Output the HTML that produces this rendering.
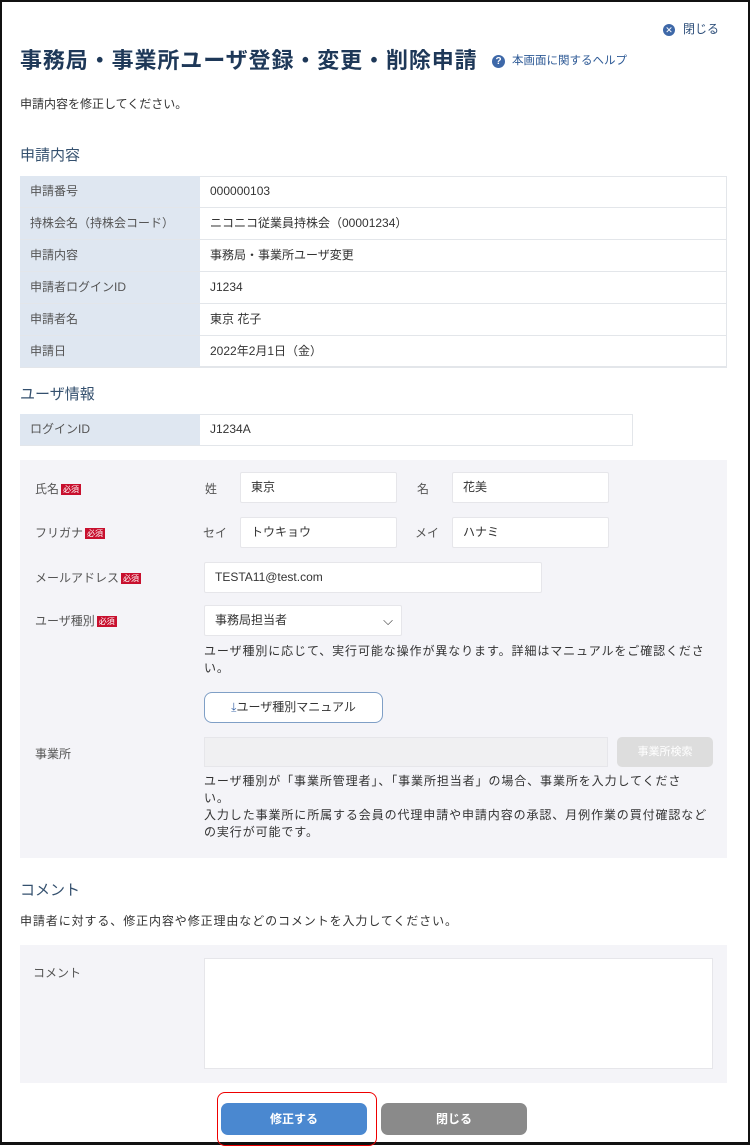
<!DOCTYPE html><html><head><meta charset="utf-8"><style>
*{box-sizing:border-box;margin:0;padding:0}
body{width:750px;height:1145px;background:#fff;font-family:"Liberation Sans","Noto Sans CJK JP",sans-serif;color:#333;font-size:12px;position:relative;overflow:hidden}
.frame{position:absolute;left:0;top:0;width:750px;height:1145px;border:2px solid #111;border-bottom-width:3px}
.a{position:absolute}
.h{color:#34506e;font-size:15px}
.lab{background:#dfe7f1;color:#555}
.cell{position:absolute;height:32px;line-height:31px;padding-left:10px;border-bottom:1px solid #e3e6ea;font-size:12px}
.in{position:absolute;background:#fff;border:1px solid #e6e6ea;border-radius:2px;height:31px;line-height:29px;padding-left:10px;font-size:12px;color:#333}
.req{display:inline-block;background:#c8102e;color:#fff;font-size:8px;line-height:11px;padding:0 2px;margin-left:2px;vertical-align:1px}
.fl{position:absolute;color:#555;font-size:12px}
.t{font-size:12px;letter-spacing:0.9px;line-height:17px}
</style></head><body>
<div class="frame"></div>
<div class="a" style="left:663px;top:20px;font-size:12px;color:#2e4f7a"><span style="display:inline-block;width:12px;height:12px;border-radius:50%;background:#3e68a8;color:#fff;font-size:9px;line-height:12px;text-align:center;margin-right:8px">✕</span>閉じる</div>
<div class="a" style="left:20px;top:43px;font-size:22px;color:#1e3858;font-weight:bold;letter-spacing:0.9px">事務局・事業所ユーザ登録・変更・削除申請</div>
<div class="a" style="left:492px;top:52px;font-size:11.5px;color:#2e5a96"><span style="display:inline-block;width:13px;height:13px;border-radius:50%;background:#3e68a8;color:#fff;font-size:10px;line-height:13px;text-align:center;margin-right:7px;font-weight:bold">?</span>本画面に関するヘルプ</div>
<div class="a t" style="left:20px;top:96px;letter-spacing:0">申請内容を修正してください。</div>
<div class="a h" style="left:20px;top:144px">申請内容</div>
<div class="a" style="left:20px;top:176px;width:707px;height:191px;border:1px solid #e3e6ea"></div>
<div class="cell lab" style="left:20px;top:176px;width:180px">申請番号</div><div class="cell" style="left:200px;top:176px;width:527px">000000103</div>
<div class="cell lab" style="left:20px;top:208px;width:180px">持株会名（持株会コード）</div><div class="cell" style="left:200px;top:208px;width:527px">ニコニコ従業員持株会（00001234）</div>
<div class="cell lab" style="left:20px;top:240px;width:180px">申請内容</div><div class="cell" style="left:200px;top:240px;width:527px">事務局・事業所ユーザ変更</div>
<div class="cell lab" style="left:20px;top:272px;width:180px">申請者ログインID</div><div class="cell" style="left:200px;top:272px;width:527px">J1234</div>
<div class="cell lab" style="left:20px;top:304px;width:180px">申請者名</div><div class="cell" style="left:200px;top:304px;width:527px">東京 花子</div>
<div class="cell lab" style="left:20px;top:336px;width:180px">申請日</div><div class="cell" style="left:200px;top:336px;width:527px">2022年2月1日（金）</div>
<div class="a h" style="left:20px;top:383px">ユーザ情報</div>
<div class="a" style="left:20px;top:414px;width:613px;height:32px;border:1px solid #e3e6ea"></div>
<div class="cell lab" style="left:20px;top:414px;width:180px">ログインID</div><div class="cell" style="left:200px;top:414px;width:433px">J1234A</div>
<div class="a" style="left:20px;top:460px;width:707px;height:398px;background:#f4f4f8"></div>
<div class="fl" style="left:35px;top:480px">氏名<span class="req">必須</span></div>
<div class="fl" style="left:205px;top:480px">姓</div><div class="in" style="left:240px;top:472px;width:157px">東京</div>
<div class="fl" style="left:417px;top:480px">名</div><div class="in" style="left:452px;top:472px;width:157px">花美</div>
<div class="fl" style="left:35px;top:524px">フリガナ<span class="req">必須</span></div>
<div class="fl" style="left:203px;top:524px">セイ</div><div class="in" style="left:240px;top:517px;width:157px">トウキョウ</div>
<div class="fl" style="left:415px;top:524px">メイ</div><div class="in" style="left:452px;top:517px;width:157px">ハナミ</div>
<div class="fl" style="left:35px;top:569px">メールアドレス<span class="req">必須</span></div>
<div class="in" style="left:204px;top:562px;width:338px">TESTA11@test.com</div>
<div class="fl" style="left:35px;top:612px">ユーザ種別<span class="req">必須</span></div>
<div class="in" style="left:204px;top:605px;width:198px">事務局担当者<span style="position:absolute;right:8px;top:0;font-size:13px">⌵</span></div>
<div class="a t" style="left:204px;top:643px;width:515px">ユーザ種別に応じて、実行可能な操作が異なります。詳細はマニュアルをご確認くださ<br>い。</div>
<div class="a" style="left:204px;top:692px;width:179px;height:31px;border:1.5px solid #7f9fc6;border-radius:8px;background:#fff;font-size:12px;line-height:28px;text-align:center;color:#333"><span style="color:#3e68a8">⤓</span>ユーザ種別マニュアル</div>
<div class="fl" style="left:35px;top:745px">事業所</div>
<div class="a" style="left:204px;top:737px;width:404px;height:30px;background:#f0f0f2;border:1px solid #e6e6ea"></div>
<div class="a" style="left:617px;top:737px;width:96px;height:30px;background:#ddd;border-radius:5px;color:#fff;font-size:11px;line-height:30px;text-align:center">事業所検索</div>
<div class="a t" style="left:204px;top:773px;width:520px">ユーザ種別が「事業所管理者」、「事業所担当者」の場合、事業所を入力してくださ<br>い。<br>入力した事業所に所属する会員の代理申請や申請内容の承認、月例作業の買付確認など<br>の実行が可能です。</div>
<div class="a h" style="left:20px;top:879px">コメント</div>
<div class="a t" style="left:20px;top:913px">申請者に対する、修正内容や修正理由などのコメントを入力してください。</div>
<div class="a" style="left:20px;top:945px;width:707px;height:138px;background:#f4f4f8"></div>
<div class="fl" style="left:33px;top:964px">コメント</div>
<div class="a" style="left:204px;top:958px;width:509px;height:111px;background:#fff;border:1px solid #e6e6ea"></div>
<div class="a" style="left:217px;top:1092px;width:160px;height:54px;border:1.5px solid #e00;border-radius:8px"></div>
<div class="a" style="left:221px;top:1103px;width:146px;height:32px;background:#4a88d0;border-radius:7px;color:#fff;font-weight:bold;font-size:12px;line-height:32px;text-align:center">修正する</div>
<div class="a" style="left:381px;top:1103px;width:146px;height:32px;background:#8a8a8a;border-radius:7px;color:#fff;font-weight:bold;font-size:12px;line-height:32px;text-align:center">閉じる</div>
</body></html>
